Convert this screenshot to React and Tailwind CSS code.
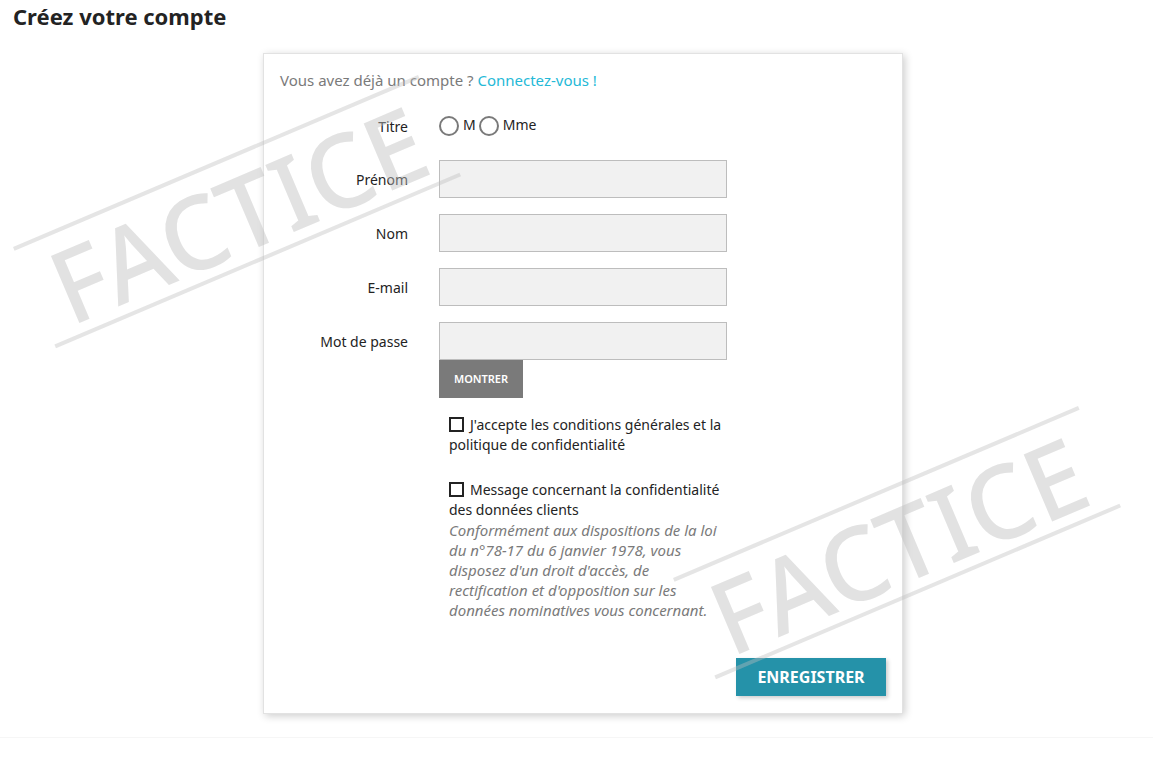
import React from "react";

function Watermark({ className }) {
  return (
    <div
      className={
        "pointer-events-none absolute z-10 w-[440px] h-[110px] origin-top-left rotate-[-23deg] border-y-4 border-[#bebebe]/40 " +
        className
      }
    >
      <div className="mt-[2px] text-center text-[102px] leading-none font-medium text-[#bebebe]/45 font-['Noto_Sans',sans-serif] whitespace-nowrap">
        FACTICE
      </div>
    </div>
  );
}

function Row({ label, children, className = "" }) {
  return (
    <div className={"flex items-start " + className}>
      <div className="w-[128px] h-[38px] flex items-center justify-end text-[14px] text-[#232323]">
        {label}
      </div>
      <div className="ml-[31px] w-[288px]">{children}</div>
    </div>
  );
}

function Input() {
  return <div className="h-[38px] w-[288px] bg-[#f1f1f1] border border-[#bdbdbd]" />;
}

export default function App() {
  return (
    <div className="relative w-[1153px] h-[768px] overflow-hidden bg-white font-['Noto_Sans',sans-serif]">
      <h1 className="pl-[13px] pt-[1px] text-[22px] leading-[30px] font-bold text-[#232323]">
        Créez votre compte
      </h1>

      <div className="ml-[263px] mt-[22px] w-[640px] h-[661px] bg-white border border-[#e2e2e2] shadow-[2px_2px_8px_0_rgba(0,0,0,0.2)] px-4 pt-4 pb-4">
        <p className="text-[15px] leading-[20px] text-[#7a7a7a]">
          Vous avez déjà un compte ? <span className="text-[#24b9d7]">Connectez-vous !</span>
        </p>

        <div className="mt-[24px] flex items-center">
          <div className="w-[128px] flex justify-end text-[14px] text-[#232323] pt-[2px]">Titre</div>
          <div className="ml-[31px] flex items-center text-[14px] text-[#232323]">
            <span className="inline-block w-5 h-5 rounded-full border-2 border-[#7a7a7a] mr-[4px]" />
            <span className="mr-[3px] leading-[20px] -mt-[2px]">M</span>
            <span className="inline-block w-5 h-5 rounded-full border-2 border-[#7a7a7a] mr-[4px]" />
            <span className="leading-[20px] -mt-[2px]">Mme</span>
          </div>
        </div>

        <Row label="Prénom" className="mt-[23px]">
          <Input />
        </Row>
        <Row label="Nom" className="mt-4">
          <Input />
        </Row>
        <Row label="E-mail" className="mt-4">
          <Input />
        </Row>
        <Row label="Mot de passe" className="mt-4">
          <Input />
          <div className="w-[84px] h-[38px] bg-[#7a7a7a] flex items-center justify-center text-[11px] font-semibold text-white">
            MONTRER
          </div>
        </Row>

        <div className="ml-[159px] pl-[10px] w-[298px] mt-[17px] text-[14px] leading-[20px] text-[#232323]">
          <div>
            <span className="inline-block w-[15px] h-[15px] border-2 border-[#232323] mr-[6px] align-[-2px]" />
            J'accepte les conditions générales et la
            <br />
            politique de confidentialité
          </div>
          <div className="mt-[25px]">
            <span className="inline-block w-[15px] h-[15px] border-2 border-[#232323] mr-[6px] align-[-2px]" />
            Message concernant la confidentialité
            <br />
            des données clients
            <div className="italic text-[15px] text-[#7a7a7a] whitespace-nowrap">
              Conformément aux dispositions de la loi
              <br />
              du n°78-17 du 6 janvier 1978, vous
              <br />
              disposez d'un droit d'accès, de
              <br />
              rectification et d'opposition sur les
              <br />
              données nominatives vous concernant.
            </div>
          </div>
        </div>

        <div className="mt-[38px] flex justify-end">
          <div className="w-[150px] h-[38px] bg-[#2592a9] shadow-[2px_2px_4px_0_rgba(0,0,0,0.2)] flex items-center justify-center text-[16px] font-bold text-white">
            ENREGISTRER
          </div>
        </div>
      </div>

      <div className="mt-[23px] border-t border-[#f6f6f6]" />

      <Watermark className="left-[13px] top-[247px]" />
      <Watermark className="left-[673px] top-[578px]" />
    </div>
  );
}
